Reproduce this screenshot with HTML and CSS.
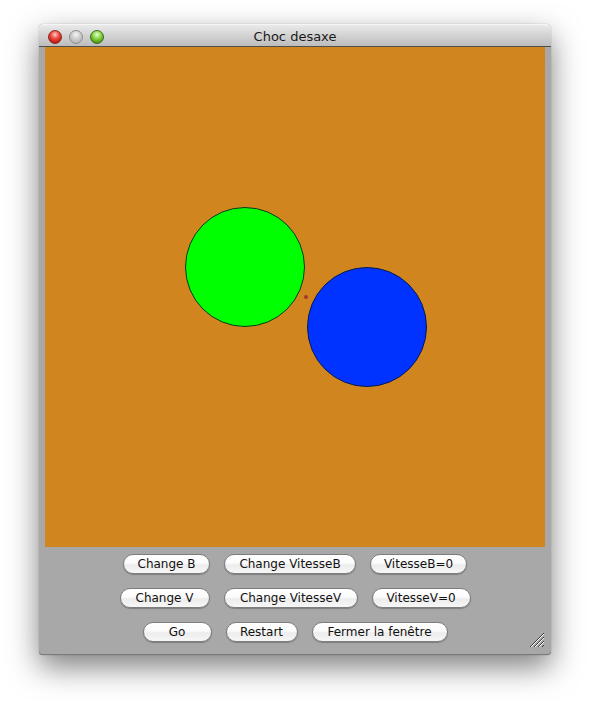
FILE: index.html
```html
<!DOCTYPE html>
<html lang="fr">
<head>
<meta charset="utf-8">
<title>Choc desaxe</title>
<link rel="stylesheet" href="styles.css">
</head>
<body>
<div class="window">
  <div class="titlebar">
    <div class="lights">
      <span class="light red"></span>
      <span class="light gray"></span>
      <span class="light green"></span>
    </div>
    <div class="title">Choc desaxe</div>
  </div>
  <div class="canvas">
    <svg width="500" height="500" viewBox="0 0 500 500">
      <circle cx="200" cy="220" r="59.5" fill="#00ff00" stroke="#0b3a1a" stroke-width="1"/>
      <circle cx="322" cy="280" r="59.5" fill="#0033ff" stroke="#0a1a4a" stroke-width="1"/>
      <circle cx="261" cy="250" r="2" fill="#a8382a"/>
    </svg>
  </div>
  <div class="controls">
    <div class="row">
      <button class="btn w87">Change B</button>
      <button class="btn w132">Change VitesseB</button>
      <button class="btn w97">VitesseB=0</button>
    </div>
    <div class="row">
      <button class="btn w90">Change V</button>
      <button class="btn w134">Change VitesseV</button>
      <button class="btn w99">VitesseV=0</button>
    </div>
    <div class="row">
      <button class="btn w69">Go</button>
      <button class="btn w72">Restart</button>
      <button class="btn w136">Fermer la fenêtre</button>
    </div>
  </div>
  <svg class="grip" width="16" height="16" viewBox="0 0 16 16">
    <g stroke-width="1" shape-rendering="crispEdges">
      <line x1="1" y1="15" x2="15" y2="1" stroke="#3a3a3a"/>
      <line x1="2" y1="15" x2="15" y2="2" stroke="#ffffff"/>
      <line x1="5" y1="15" x2="15" y2="5" stroke="#3a3a3a"/>
      <line x1="6" y1="15" x2="15" y2="6" stroke="#ffffff"/>
      <line x1="9" y1="15" x2="15" y2="9" stroke="#3a3a3a"/>
      <line x1="10" y1="15" x2="15" y2="10" stroke="#ffffff"/>
      <line x1="13" y1="15" x2="15" y2="13" stroke="#3a3a3a"/>
    </g>
  </svg>
</div>
</body>
</html>
```

FILE: styles.css
```css
html, body {
  margin: 0;
  padding: 0;
  background: #ffffff;
}

body {
  box-sizing: border-box;
  min-height: 709px;
  padding: 24px 0 0 39px;
  font-family: "DejaVu Sans", "Liberation Sans", sans-serif;
}

.window {
  position: relative;
  box-sizing: border-box;
  width: 512px;
  height: 631px;
  background: #a8a8a8;
  border-bottom: 1px solid #7a7a7a;
  border-radius: 5px 5px 4px 4px;
  box-shadow: 0 12px 30px rgba(0, 0, 0, 0.5), 0 0 1px rgba(0, 0, 0, 0.5);
  display: flex;
  flex-direction: column;
}

.titlebar {
  position: relative;
  height: 22px;
  border-bottom: 1px solid #4f4f4f;
  border-radius: 5px 5px 0 0;
  background: linear-gradient(#ececec 0%, #d6d6d6 45%, #bdbdbd 100%);
  box-shadow: inset 0 1px 0 #f6f6f6;
  display: flex;
  align-items: center;
  justify-content: center;
}

.lights {
  position: absolute;
  left: 9px;
  top: 6px;
  display: flex;
  gap: 7px;
}

.light {
  width: 14px;
  height: 14px;
  border-radius: 50%;
  box-sizing: border-box;
}

.light.red {
  background: radial-gradient(circle at 50% 30%, #ffd0cc 0%, #f0564b 35%, #c4190f 75%, #a80f08 100%);
  border: 1px solid #8a2a25;
}

.light.gray {
  background: radial-gradient(circle at 50% 30%, #f4f4f4 0%, #d0d0d0 40%, #b4b4b4 80%, #a8a8a8 100%);
  border: 1px solid #8f8f8f;
}

.light.green {
  background: radial-gradient(circle at 50% 30%, #e6ffd0 0%, #8ed84a 38%, #4c9a14 78%, #3c800c 100%);
  border: 1px solid #3e6d20;
}

.title {
  font-size: 13px;
  color: #1a1a1a;
  margin-top: 2px;
}

.canvas {
  margin: 0 6px;
  width: 500px;
  height: 500px;
  background: #d0851e;
}

.canvas svg {
  display: block;
}

.controls {
  flex: 1;
  padding-top: 7px;
  display: flex;
  flex-direction: column;
  gap: 14px;
}

.row {
  display: flex;
  justify-content: center;
  gap: 14px;
}

.btn {
  height: 20px;
  padding: 0;
  margin: 0;
  border: 1px solid #7d7d7d;
  border-radius: 10px;
  background: linear-gradient(#ffffff 0%, #fbfbfb 45%, #ececec 55%, #f7f7f7 100%);
  box-shadow: 0 1px 1px rgba(0, 0, 0, 0.25);
  font-family: "DejaVu Sans", "Liberation Sans", sans-serif;
  font-size: 12px;
  color: #111111;
  line-height: 18px;
  text-align: center;
}

.w69 { width: 69px; }
.w72 { width: 72px; }
.w87 { width: 87px; }
.w90 { width: 90px; }
.w97 { width: 97px; }
.w99 { width: 99px; }
.w132 { width: 132px; }
.w134 { width: 134px; }
.w136 { width: 136px; }

.grip {
  position: absolute;
  right: 6px;
  bottom: 6px;
}
```
